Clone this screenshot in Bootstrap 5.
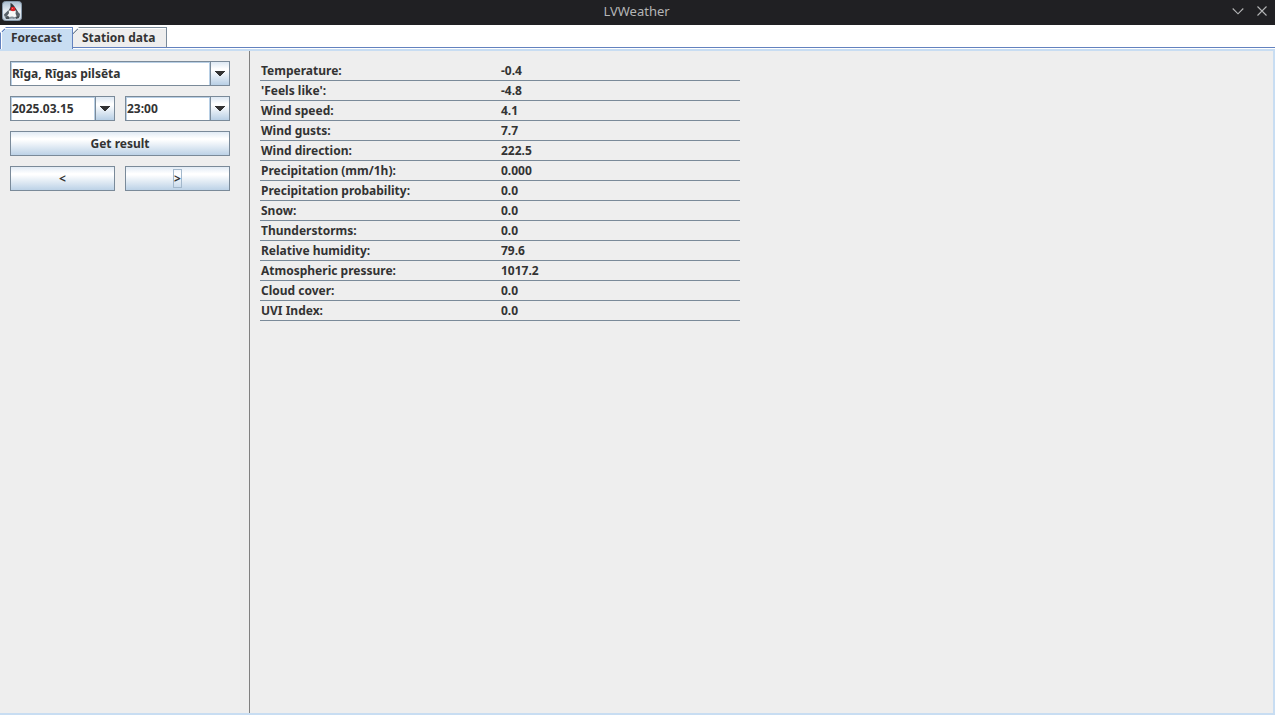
<!DOCTYPE html>
<html lang="en">
<head>
<meta charset="utf-8">
<meta name="viewport" content="width=device-width, initial-scale=1">
<title>LVWeather</title>
<link href="https://cdn.jsdelivr.net/npm/bootstrap@5.3.0/dist/css/bootstrap.min.css" rel="stylesheet">
<style>
  :root {
    --edge: #7a8a99;
    --blue: #c8ddf2;
    --line: #6382bf;
    --metal: linear-gradient(#dde8f3, #fff 30%, #fff 35%, #b8cfe5);
  }
  body { background: #eee; color: #333; font: 700 12px/16px "Noto Sans", sans-serif; }
  .titlebar { height: 25px; padding-right: 2px; background: #202023; color: #b4b5b6; font-size: 13px; font-weight: 400; line-height: 22px; }
  .app-icon { top: 1px; left: 2px; }
  .window-controls { top: 0; right: 1px; height: 22px; }
  .window-controls button { width: 24px; padding: 0; border: 0; background: none; color: inherit; line-height: 0; }
  .tabstrip { height: 24px; padding-top: 2px; background: linear-gradient(#fff 22px, var(--line) 22px, var(--line) 23px, #fff 23px); }
  .tab { --fill: #eee; --rim: var(--edge); min-width: 94px; height: 21px; padding: 0 9px; border: 1px solid var(--rim); border-bottom-color: var(--line); border-left: 0;
    background: linear-gradient(135deg, var(--rim) 5px, var(--fill) 5px) border-box; box-shadow: inset 0 1px #fff; color: #333; font-weight: 700; line-height: 18px; text-align: left; white-space: nowrap;
    clip-path: polygon(6px 0, 100% 0, 100% 100%, 0 100%, 0 6px); }
  .tab[aria-selected="true"] { --fill: var(--blue); --rim: var(--line); width: 73px; min-width: 0; height: 22px; padding: 0 0 2px 10px; border: 1px solid var(--rim); border-bottom: 0; box-shadow: inset 1px 1px #fff; }
  .pane { border: solid var(--blue); border-width: 2px 2px 2px 0; }
  .sidebar { width: 250px; padding: 10px 19px 10px 10px; border-right: 1px solid #808080; }
  .sidebar, .pair { gap: 10px; }
  .form-select.combo, .btn.metal { height: 25px; border: 1px solid var(--edge); border-radius: 0; color: #333; font-size: 12px; font-weight: 700; line-height: 16px; box-shadow: none; }
  .form-select.combo { padding: 3px 20px 3px 1px;
    background:
      url("data:image/svg+xml,%3Csvg xmlns='http://www.w3.org/2000/svg' width='10' height='5' shape-rendering='crispEdges'%3E%3Cpath fill='%23333' d='M0 0h10v1H9v1H8v1H7v1H6v1H4V4H3V3H2V2H1V1H0z'/%3E%3C/svg%3E") right 4px top 9px / 10px 5px no-repeat,
      var(--metal) right / 18px 100% no-repeat,
      linear-gradient(var(--edge), var(--edge)) right 18px top / 1px 100% no-repeat,
      linear-gradient(#b8cfe5, #b8cfe5) right 19px top / 1px 100% no-repeat,
      linear-gradient(#b8cfe5, #b8cfe5) left top / 100% 1px no-repeat,
      linear-gradient(#b8cfe5, #b8cfe5) left top / 1px 100% no-repeat,
      #fff; }
  .btn.metal { padding: 3px 8px; background: var(--metal) border-box; }
  .focus-box { display: inline-block; height: 19px; margin-top: -1px; outline: 1px solid #a3b8cc; outline-offset: -1px; padding: 1px; line-height: 18px; }
  .results { padding: 10px; }
  .readings { max-width: 480px; width: 100%; margin: 0; table-layout: fixed; border-collapse: separate; border-spacing: 0; }
  .readings th, .readings td { height: 20px; padding: 0 1px; border-bottom: 1px solid var(--edge); line-height: 19px; font-weight: 700; }
</style>
</head>
<body class="d-flex flex-column min-vh-100">
<header class="titlebar position-relative text-center">
  <svg class="app-icon position-absolute" width="20" height="20" viewBox="0 0 20 20" aria-hidden="true">
    <defs><linearGradient id="tile" x2="0" y2="1"><stop stop-color="#a9bdd0"/><stop offset=".5" stop-color="#e8eef4"/><stop offset="1" stop-color="#c2d0dc"/></linearGradient></defs>
    <rect x=".5" y=".5" width="19" height="19" rx="3" fill="url(#tile)" stroke="#8799aa"/>
    <path d="M8.500 2c1.500.3 2.500 2 4 3.500l3 4.500 1 3h-10l.5-4 1.500-3z" fill="#30363b"/>
    <path d="M7 9.500h7l1.500 6-1.500 1-3.500-1-2.500 1.500-2-1z" fill="#f7f8f8"/>
    <path d="M6.500 9L2 13.500l.5 2 2.500-.5 2-3zM14 9l4 4-.5 3-2.500.5-1.500-4z" fill="#596269"/>
    <path d="M3 15.500l3-.5 2 1.500-1 1.500H4zM13 16l4-1v2l-3 1z" fill="#474f55"/>
    <path d="M7 16l3-.500 4 1-2 1.500-2-.5-3 .5z" fill="#84909a"/>
    <ellipse cx="11" cy="8" rx="2.500" ry="2.200" fill="#e12227"/>
    <circle cx="10.500" cy="7.300" r=".6" fill="#ff8580"/>
  </svg>
  <span>LVWeather</span>
  <div class="window-controls position-absolute d-flex">
    <button type="button" aria-label="Minimize"><svg width="12" height="12" viewBox="0 0 12 12" fill="none" stroke="currentColor" stroke-width="1.100"><path d="M.7 3.500L6 8.800l5.300-5.300"/></svg></button>
    <button type="button" aria-label="Close"><svg width="12" height="12" viewBox="0 0 12 12" fill="none" stroke="currentColor" stroke-width="1.100"><path d="M1.500 1.500l9 9m0-9l-9 9"/></svg></button>
  </div>
</header>
<div class="tabstrip d-flex align-items-start" role="tablist">
  <button class="tab" type="button" role="tab" aria-selected="true">Forecast</button>
  <button class="tab" type="button" role="tab" aria-selected="false">Station data</button>
</div>
<main class="pane d-flex flex-grow-1">
  <form class="sidebar d-flex flex-column flex-shrink-0">
    <select class="form-select combo" aria-label="Location"><option>Rīga, Rīgas pilsēta</option></select>
    <div class="pair d-flex">
      <select class="form-select combo" aria-label="Date"><option>2025.03.15</option></select>
      <select class="form-select combo" aria-label="Time"><option>23:00</option></select>
    </div>
    <button class="btn metal" type="button">Get result</button>
    <div class="pair d-flex">
      <button class="btn metal w-100" type="button" aria-label="Previous hour">&lt;</button>
      <button class="btn metal w-100" type="button" aria-label="Next hour"><span class="focus-box">&gt;</span></button>
    </div>
  </form>
  <section class="results flex-grow-1">
    <table class="readings">
      <tbody>
        <tr><th scope="row">Temperature:</th><td>-0.4</td></tr>
        <tr><th scope="row">'Feels like':</th><td>-4.8</td></tr>
        <tr><th scope="row">Wind speed:</th><td>4.1</td></tr>
        <tr><th scope="row">Wind gusts:</th><td>7.7</td></tr>
        <tr><th scope="row">Wind direction:</th><td>222.5</td></tr>
        <tr><th scope="row">Precipitation (mm/1h):</th><td>0.000</td></tr>
        <tr><th scope="row">Precipitation probability:</th><td>0.0</td></tr>
        <tr><th scope="row">Snow:</th><td>0.0</td></tr>
        <tr><th scope="row">Thunderstorms:</th><td>0.0</td></tr>
        <tr><th scope="row">Relative humidity:</th><td>79.6</td></tr>
        <tr><th scope="row">Atmospheric pressure:</th><td>1017.2</td></tr>
        <tr><th scope="row">Cloud cover:</th><td>0.0</td></tr>
        <tr><th scope="row">UVI Index:</th><td>0.0</td></tr>
      </tbody>
    </table>
  </section>
</main>
<script src="https://cdn.jsdelivr.net/npm/bootstrap@5.3.0/dist/js/bootstrap.bundle.min.js"></script>
</body>
</html>
